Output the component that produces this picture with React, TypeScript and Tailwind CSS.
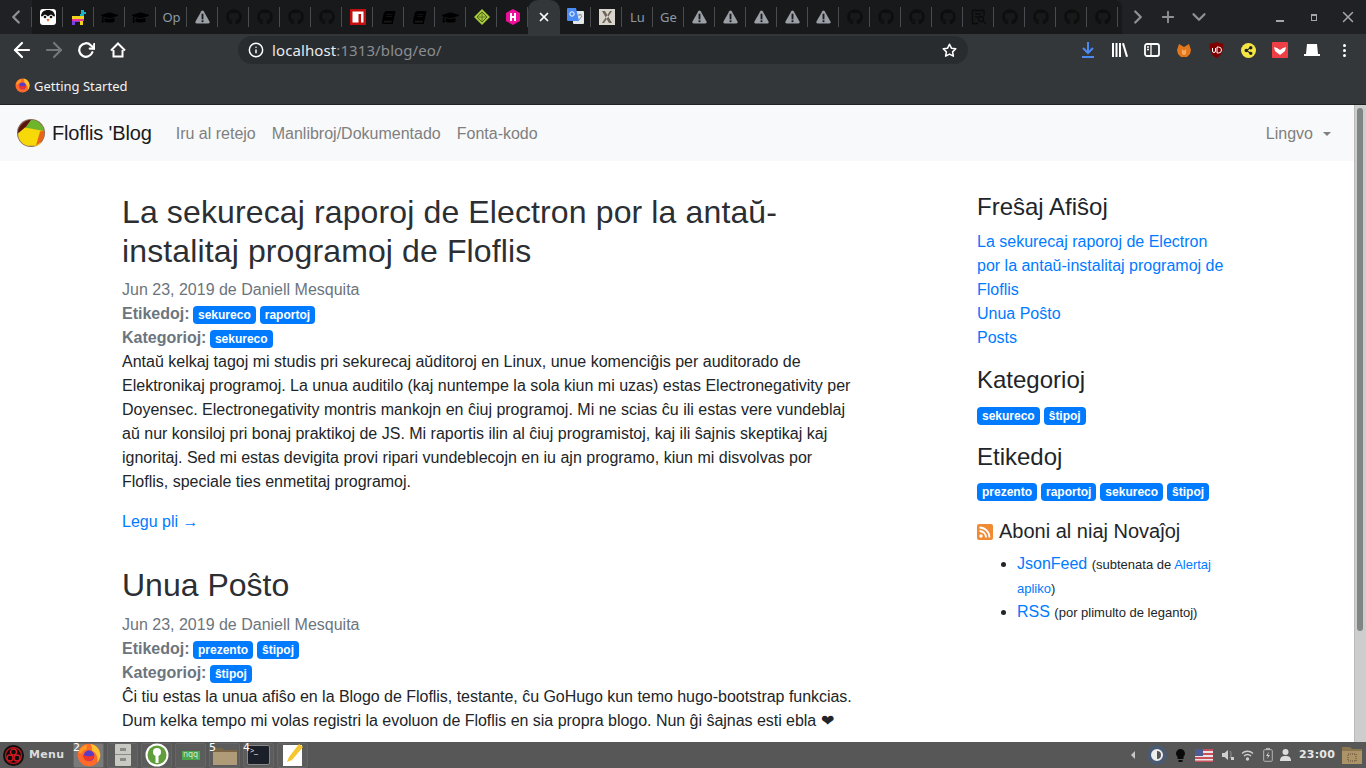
import type { ReactNode } from "react";
import { FaBook, FaGithub, FaGraduationCap, FaShareAlt } from "react-icons/fa";
import {
  FiArrowLeft,
  FiArrowRight,
  FiChevronDown,
  FiChevronLeft,
  FiChevronRight,
  FiPlus,
  FiX,
  FiInfo,
  FiRotateCw,
  FiStar,
} from "react-icons/fi";

const Warn = () => (
  <svg width="15" height="14" viewBox="0 0 16 15">
    <path d="M8 0.5c.6 0 1 .3 1.300.8l6.200 11c.5 1-.1 2.200-1.300 2.200H1.800C.6 14.500 0 13.300 .5 12.300l6.200-11C7 .8 7.400 .5 8 .5z" fill="#9aa0a6" />
    <rect x="7" y="4" width="2" height="6" fill="#1a1b1d" />
    <rect x="7" y="11" width="2" height="2" fill="#1a1b1d" />
  </svg>
);

const Gh = () => <FaGithub size={16} color="#0e0e0f" />;
const Cap = () => <FaGraduationCap size={17} color="#000" />;
const Bk = () => <FaBook size={13} color="#000" className="-skew-x-12" />;

const Penguin = () => (
  <svg width="16" height="16" viewBox="0 0 16 16">
    <rect width="16" height="16" rx="3" fill="#fff" />
    <path d="M8 1C4 1 1.500 3 1 7c1 1 2 0 3-1 1-.5 2.500 0 4 1.500C9.500 6 11 5.500 12 6c1 1 2 2 3 1-.5-4-3-6-7-6z" fill="#111" />
    <circle cx="5" cy="8" r="1.300" fill="#111" />
    <circle cx="11" cy="8" r="1.300" fill="#111" />
    <path d="M6.500 10h3L8 13z" fill="#e8642c" />
  </svg>
);

const Pinata = () => (
  <svg width="16" height="17" viewBox="0 0 16 17">
    <path d="M10 1h3v2h2v2h-2v4H9V5h1z" fill="#17b4c8" />
    <rect x="1" y="7" width="12" height="3" fill="#f2d41f" />
    <rect x="1" y="10" width="12" height="2" fill="#e7359a" />
    <rect x="1" y="12" width="3" height="4" fill="#7b3fe4" />
    <rect x="9" y="12" width="3" height="4" fill="#f2d41f" />
    <rect x="4" y="12" width="5" height="1" fill="#7b3fe4" />
  </svg>
);

const Npm = () => (
  <svg width="16" height="16" viewBox="0 0 16 16">
    <rect width="16" height="16" fill="#c50f0f" />
    <path d="M2.500 2.500h11v11H11V5H8.500v8.500h-6z" fill="#fff" />
  </svg>
);

const Diamond = () => (
  <svg width="16" height="16" viewBox="0 0 16 16">
    <path d="M8 0l8 8-8 8-8-8z" fill="#a5c93c" />
    <path d="M8 3l5 5-5 5-5-5z" fill="none" stroke="#55661c" strokeWidth="1" />
    <path d="M3 8h10M8 3v10" stroke="#55661c" strokeWidth=".8" />
  </svg>
);

const Hexo = () => (
  <svg width="16" height="16" viewBox="0 0 16 16">
    <path d="M8 0l7 4v8l-7 4-7-4V4z" fill="#ef0f9b" />
    <path d="M5 4h2v3h2V4h2v8H9V9H7v3H5z" fill="#fff" />
  </svg>
);

const Translate = () => (
  <svg width="17" height="18" viewBox="0 0 17 18">
    <rect x="6" y="3" width="11" height="13" rx="1" fill="#e4e7ea" />
    <path d="M11 7h4M13 6v1M12 12l3-4" stroke="#7d8a96" strokeWidth="1" />
    <path d="M1 0h8l3 13H1a1 1 0 01-1-1V1a1 1 0 011-1z" fill="#4a8af4" />
    <circle cx="5" cy="6" r="2.200" fill="none" stroke="#fff" strokeWidth="1" />
  </svg>
);

const Xbox = () => (
  <svg width="16" height="16" viewBox="0 0 16 16">
    <rect width="16" height="16" fill="#d9d5cc" />
    <path d="M3 2l3 0 7 12-3 0zM13 2l-2 0-8 12 2 0z" fill="#6b6457" />
  </svg>
);

const SearchDoc = () => (
  <svg width="16" height="16" viewBox="0 0 16 16" fill="none" stroke="#0b0b0c" strokeWidth="1.300">
    <path d="M13 7V1.500H1.500v13H7" />
    <path d="M4 5h6M4 8h3" />
    <circle cx="10" cy="10" r="2.500" />
    <path d="M12 12l3 3" />
  </svg>
);

const Letters = ({ t }: { t: string }) => (
  <span className="text-[13px] text-[#8d99a6] [font-family:'Noto_Sans',sans-serif]">{t}</span>
);

const beforeActive: ReactNode[] = [
  <Penguin />,
  <Pinata />,
  <Cap />,
  <Cap />,
  <Letters t="Op" />,
  <Warn />,
  <Gh />,
  <Gh />,
  <Gh />,
  <Gh />,
  <Npm />,
  <Bk />,
  <Bk />,
  <Cap />,
  <Diamond />,
  <Hexo />,
];

const afterActive: ReactNode[] = [
  <Translate />,
  <Xbox />,
  <Letters t="Lu" />,
  <Letters t="Ge" />,
  <Warn />,
  <Warn />,
  <Warn />,
  <Warn />,
  <Warn />,
  <Gh />,
  <Gh />,
  <Gh />,
  <Gh />,
  <SearchDoc />,
  <Gh />,
  <Gh />,
  <Gh />,
  <Gh />,
];

const TabSlot = ({ children }: { children: ReactNode }) => (
  <div className="flex w-[31px] h-[34px] shrink-0 items-center justify-center relative">
    {children}
    <span className="absolute right-0 top-[7px] h-[20px] w-px bg-[#4a4c4f]" />
  </div>
);

const TabStrip = () => (
  <div className="flex h-[34px] shrink-0 bg-[#202124]">
    <div className="flex bg-[#18191b] w-[1122px] shrink-0 rounded-tr-[8px]">
      <div className="flex w-[32px] h-[34px] items-center justify-center relative bg-[#202124]">
        <FiChevronLeft size={22} color="#8f9194" strokeWidth={2.500} />
        <span className="absolute right-0 top-[7px] h-[20px] w-px bg-[#4a4c4f]" />
      </div>
      {beforeActive.map((icon, i) => (
        <TabSlot key={i}>{icon}</TabSlot>
      ))}
      <div className="relative flex w-[32px] h-[34px] shrink-0 items-center justify-center rounded-t-[10px] bg-[#33373a]">
        <FiX size={14} color="#fff" strokeWidth={3} />
      </div>
      {afterActive.map((icon, i) => (
        <TabSlot key={i}>{icon}</TabSlot>
      ))}
    </div>
    <div className="flex items-center pl-[5px]">
      <FiChevronRight size={22} color="#8f9194" strokeWidth={2.500} />
      <span className="w-[10px]" />
      <FiPlus size={18} color="#8f9194" strokeWidth={2.500} />
      <span className="w-[11px]" />
      <FiChevronDown size={22} color="#8f9194" strokeWidth={2.500} />
    </div>
    <div className="ml-auto flex items-center text-[#a4a6a8]">
      <span className="mt-[7px] block h-[2px] w-[8px] bg-[#a4a6a8] mr-[27px]" />
      <span className="block h-[7px] w-[6px] border border-[#a4a6a8] border-t-2 mr-[22px]" />
      <FiX size={18} className="mr-[9px]" />
    </div>
  </div>
);

const ExtSlot = ({ children }: { children: ReactNode }) => (
  <div className="flex h-[32px] w-[32px] shrink-0 items-center justify-center">{children}</div>
);

const Toolbar = () => (
  <div className="flex h-[32px] shrink-0 items-center bg-[#33373a]">
    <div className="flex w-[238px] items-center pl-[6px]">
      <ExtSlot>
        <FiArrowLeft size={24} color="#fff" strokeWidth={2.200} />
      </ExtSlot>
      <ExtSlot>
        <FiArrowRight size={24} color="#74777a" strokeWidth={2.200} />
      </ExtSlot>
      <ExtSlot>
        <FiRotateCw size={18} color="#fff" strokeWidth={3} />
      </ExtSlot>
      <ExtSlot>
        <svg width="16" height="16" viewBox="0 0 16 16" fill="none" stroke="#fff" strokeWidth="2">
          <path d="M1 8.500L8 1.500l7 7M3.500 8v6.500h9V8" />
        </svg>
      </ExtSlot>
    </div>
    <div className="flex h-[28px] w-[730px] items-center rounded-full bg-[#292c2f] pl-[10px] pr-[11px] text-[15px] tracking-[0.1px] [font-family:'Noto_Sans',sans-serif]">
      <FiInfo size={16} color="#fff" strokeWidth={2.200} />
      <span className="ml-[8px] text-[#e8eaed]">localhost</span>
      <span className="text-[#8b8e91]">:1313/blog/eo/</span>
      <FiStar size={15} color="#fff" strokeWidth={2.500} className="ml-auto" />
    </div>
    <div className="ml-[104px] flex flex-1 items-center">
      <ExtSlot>
        <svg width="14" height="16" viewBox="0 0 14 16" fill="none" stroke="#4c8af0" strokeWidth="2">
          <path d="M7 0v11M2 6l5 5 5-5M1 15h12" />
        </svg>
      </ExtSlot>
      <ExtSlot>
        <svg width="16" height="14" viewBox="0 0 16 14" fill="#fff">
          <rect x="0" width="2" height="14" />
          <rect x="3.500" width="2" height="14" />
          <rect x="7" width="2" height="14" />
          <path d="M10 .5l2-.5 4 13.500-2 .5z" />
        </svg>
      </ExtSlot>
      <ExtSlot>
        <svg width="16" height="14" viewBox="0 0 16 14" fill="none" stroke="#fff" strokeWidth="1.800">
          <rect x="1" y="1" width="14" height="12" rx="2" />
          <path d="M7 1v12M3 4h2M3 6.500h2" strokeWidth="1.300" />
        </svg>
      </ExtSlot>
      <ExtSlot>
        <svg width="16" height="15" viewBox="0 0 16 15">
          <path d="M3 1l5 3 5-3 2 6-1 4-3 3H5L2 11 1 7z" fill="#e2761b" />
          <path d="M6 6l2 2 2-2 0 5-2 1-2-1z" fill="#f6a964" />
        </svg>
      </ExtSlot>
      <ExtSlot>
        <svg width="15" height="16" viewBox="0 0 15 16">
          <path d="M7.500 0c2 1 4 1.500 7 1.500 0 7-2 12-7 14.500C2.500 13.500.5 8.500.5 1.500c3 0 5-.5 7-1.500z" fill="#800000" />
          <path d="M3.500 6v3a1.500 1.500 0 003 0V6M8 5v6h1.500a3 3 0 000-6z" fill="none" stroke="#fff" strokeWidth="1" />
        </svg>
      </ExtSlot>
      <ExtSlot>
        <span className="flex h-[15px] w-[15px] items-center justify-center rounded-full bg-[#f6e643]">
          <FaShareAlt size={9} color="#222" />
        </span>
      </ExtSlot>
      <ExtSlot>
        <svg width="16" height="16" viewBox="0 0 16 16">
          <rect width="16" height="16" rx="1" fill="#ef3f46" />
          <path d="M2 5l3 1 3 2 3-2 3-1-1 4-5 4-5-4z" fill="#fff" />
        </svg>
      </ExtSlot>
      <ExtSlot>
        <svg width="16" height="12" viewBox="0 0 16 12" fill="#fff">
          <path d="M3 0h10l1 10h2v2H0v-2h2z" />
        </svg>
      </ExtSlot>
      <ExtSlot>
        <span className="flex h-[13px] flex-col justify-between">
          <span className="block h-[3px] w-[3px] rounded-full bg-white" />
          <span className="block h-[3px] w-[3px] rounded-full bg-white" />
          <span className="block h-[3px] w-[3px] rounded-full bg-white" />
        </span>
      </ExtSlot>
    </div>
  </div>
);

const FirefoxMark = ({ size }: { size: number }) => (
  <svg width={size} height={size} viewBox="0 0 16 16">
    <circle cx="8" cy="8" r="7.500" fill="#ff6a2b" />
    <path d="M9 .6c3.500.4 6.400 3.400 6.500 7.400 0 2-.8 3.800-2 5.200.8-3.400-.4-6.600-3.500-8.200C10 3.500 9.800 2 9 .6z" fill="#ffc22e" />
    <path d="M1 6.500C2 3.500 4.500 1.500 7 1c-.6 1-.8 2-.4 3.200C4.500 4.500 3.500 5.500 3 7z" fill="#ff9a1f" />
    <circle cx="8" cy="8.500" r="3.600" fill="#5a3bc4" />
    <path d="M4 7.500c1.500 1.500 5 2 7.500.5-.3 2.500-2 4-4 4s-3.500-1.500-3.500-4.500z" fill="#f0362c" />
  </svg>
);

const BookmarkBar = () => (
  <div className="flex h-[39px] shrink-0 items-start border-b border-[#202225] bg-[#33373a] pl-[15px] pt-[12px]">
    <FirefoxMark size={15} />
    <span className="ml-[4px] text-[13px] leading-[17px] text-[#f1f3f4] [font-family:'Noto_Sans',sans-serif]">
      Getting Started
    </span>
  </div>
);

const NavBar = () => (
  <nav className="flex h-[56px] shrink-0 items-center bg-[#f8f9fa] pl-[17px] pr-[23px]">
    <svg width="28" height="28" viewBox="0 0 28 28">
      <circle cx="14" cy="14" r="14" fill="#8a6a5c" />
      <path d="M14 .8A13.200 13.200 0 0127 12l-19-3z" fill="#6fb52c" />
      <path d="M8 9L.8 14A13.200 13.200 0 015 5c2-2 5-4 9-4.200z" fill="#5c140c" />
      <path d="M8 8.500l19 3.500-4 13-3 1.800H10a13 13 0 01-9-12z" fill="#f7d908" />
      <path d="M27 11.500a13.200 13.200 0 01-8 15l4-14z" fill="#e8651a" />
    </svg>
    <span className="ml-[7px] text-[20px] tracking-[-0.15px] text-[#1a1a1a]">Floflis 'Blog</span>
    <a className="ml-[24px] pt-[1px] text-[#7f7f7f]">Iru al retejo</a>
    <a className="ml-[16px] pt-[1px] text-[#7f7f7f]">Manlibroj/Dokumentado</a>
    <a className="ml-[16px] pt-[1px] text-[#7f7f7f]">Fonta-kodo</a>
    <a className="ml-auto flex items-center pt-[1px] text-[#7f7f7f]">
      Lingvo
      <span className="ml-[10px] h-0 w-0 border-x-[4px] border-t-[4px] border-x-transparent border-t-[#7f7f7f]" />
    </a>
  </nav>
);

const Badge = ({ children }: { children: ReactNode }) => (
  <span className="mr-[4px] inline-block rounded-[4px] bg-[#007bff] px-[5px] py-[3px] align-baseline text-[12px] leading-[12px] font-bold text-white">
    {children}
  </span>
);

const Post = ({
  title,
  titleClass,
  tags,
  cats,
  children,
}: {
  title: ReactNode;
  titleClass: string;
  tags: string[];
  cats: string[];
  children: ReactNode;
}) => (
  <article className="mb-[32px]">
    <h2 className={`text-[32px] leading-[39px] text-[#2b2f33] ${titleClass}`}>{title}</h2>
    <p className="text-[#6c757d]">Jun 23, 2019 de Daniell Mesquita</p>
    <p className="text-[#6c757d]">
      <b className="mr-[-1px]">Etikedoj:</b>{" "}
      {tags.map((t) => (
        <Badge key={t}>{t}</Badge>
      ))}
    </p>
    <p className="text-[#6c757d]">
      <b className="mr-[-1px]">Kategorioj:</b>{" "}
      {cats.map((t) => (
        <Badge key={t}>{t}</Badge>
      ))}
    </p>
    {children}
  </article>
);

const Content = () => (
  <div className="w-[735px] shrink-0">
    <Post
      title="La sekurecaj raporoj de Electron por la antaŭ-instalitaj programoj de Floflis"
      titleClass="mb-[6.8px] tracking-[0.125px]"
      tags={["sekureco", "raportoj"]}
      cats={["sekureco"]}
    >
      <p className="mb-4 text-[#212529]">
        Antaŭ kelkaj tagoj mi studis pri sekurecaj aŭditoroj en Linux, unue komenciĝis per auditorado de Elektronikaj
        programoj. La unua auditilo (kaj nuntempe la sola kiun mi uzas) estas Electronegativity per Doyensec.
        Electronegativity montris mankojn en ĉiuj programoj. Mi ne scias ĉu ili estas vere vundeblaj aŭ nur konsiloj pri
        bonaj praktikoj de JS. Mi raportis ilin al ĉiuj programistoj, kaj ili ŝajnis skeptikaj kaj ignoritaj. Sed mi
        estas devigita provi ripari vundeblecojn en iu ajn programo, kiun mi disvolvas por Floflis, speciale ties
        enmetitaj programoj.
      </p>
      <a className="text-[#007bff]">Legu pli →</a>
    </Post>
    <Post title="Unua Poŝto" titleClass="mb-[8.4px]" tags={["prezento", "ŝtipoj"]} cats={["ŝtipoj"]}>
      <p className="tracking-[-0.03px] text-[#212529]">
        Ĉi tiu estas la unua afiŝo en la Blogo de Floflis, testante, ĉu GoHugo kun temo hugo-bootstrap funkcias. Dum
        kelka tempo mi volas registri la evoluon de Floflis en sia propra blogo. Nun ĝi ŝajnas esti ebla ❤
      </p>
    </Post>
  </div>
);

const Sidebar = () => (
  <aside className="ml-[120px] w-[250px] shrink-0 text-[#212529]">
    <h4 className="mb-2 text-[24px] leading-[28.8px]">Freŝaj Afiŝoj</h4>
    <ul className="mb-4 text-[#007bff]">
      <li>La sekurecaj raporoj de Electron por la antaŭ-instalitaj programoj de Floflis</li>
      <li>Unua Poŝto</li>
      <li>Posts</li>
    </ul>
    <h4 className="mb-2 text-[24px] leading-[28.8px]">Kategorioj</h4>
    <p className="mb-4">
      <Badge>sekureco</Badge>
      <Badge>ŝtipoj</Badge>
    </p>
    <h4 className="mb-2 text-[24px] leading-[28.8px]">Etikedoj</h4>
    <p className="mb-4">
      <Badge>prezento</Badge>
      <Badge>raportoj</Badge>
      <Badge>sekureco</Badge>
      <Badge>ŝtipoj</Badge>
    </p>
    <h5 className="mb-2 flex items-center text-[20px] leading-[24px]">
      <svg width="16" height="16" viewBox="0 0 16 16" className="mr-[6px] mt-[2px]">
        <rect width="16" height="16" rx="2" fill="#f08a33" />
        <circle cx="4" cy="12" r="1.700" fill="#fff" />
        <path d="M2.500 7a6.500 6.500 0 016.500 6.500M2.500 3.500a10 10 0 0110 10" fill="none" stroke="#fff" strokeWidth="1.800" />
      </svg>
      Aboni al niaj Novaĵoj
    </h5>
    <ul className="list-disc pl-[40px] pt-[1px]">
      <li>
        <a className="text-[#007bff]">JsonFeed</a>{" "}
        <small className="text-[13px] leading-none">
          (subtenata de <a className="text-[#007bff]">Alertaj apliko</a>)
        </small>
      </li>
      <li>
        <a className="text-[#007bff]">RSS</a>{" "}
        <small className="text-[13px] leading-none">(por plimulto de legantoj)</small>
      </li>
    </ul>
  </aside>
);

const DockSlot = ({ active, num, children }: { active?: boolean; num?: string; children: ReactNode }) => (
  <div
    className={`relative flex h-[25px] w-[31px] shrink-0 items-center justify-center rounded-[2px] border border-[#666] ${
      active ? "bg-[#7a7a7a]" : "bg-[#5c5c5c]"
    }`}
  >
    {children}
    {num && (
      <span className="absolute -left-[1px] -top-[2px] text-[11px] leading-[12px] text-white [font-family:'DejaVu_Sans',sans-serif]">
        {num}
      </span>
    )}
  </div>
);

const TaskBar = () => (
  <div className="flex h-[26px] shrink-0 items-center bg-[#575757] pl-[3px]">
    <svg width="21" height="21" viewBox="0 0 21 21">
      <circle cx="10.500" cy="10.500" r="10.500" fill="#0d0d0d" />
      <circle cx="10.500" cy="10.500" r="8" fill="none" stroke="#b3141c" strokeWidth="1.500" />
      <circle cx="10.500" cy="7" r="3" fill="none" stroke="#d11a22" strokeWidth="1.300" />
      <circle cx="7" cy="13" r="3" fill="none" stroke="#d11a22" strokeWidth="1.300" />
      <circle cx="14" cy="13" r="3" fill="none" stroke="#d11a22" strokeWidth="1.300" />
    </svg>
    <span className="ml-[5px] w-[44px] text-[11px] font-bold tracking-[0.3px] text-[#dcdcdc] [font-family:'DejaVu_Sans',sans-serif]">
      Menu
    </span>
    <div className="flex gap-[3px]">
      <DockSlot active num="2">
        <FirefoxMark size={24} />
      </DockSlot>
      <DockSlot>
        <svg width="18" height="24" viewBox="0 0 18 24">
          <rect x="1" y="1" width="16" height="22" rx="1" fill="#c9c9c4" />
          <rect x="1" y="11" width="16" height="1" fill="#8a8a86" />
          <rect x="6" y="5" width="6" height="3" fill="#8a8a86" />
          <rect x="6" y="15" width="6" height="3" fill="#8a8a86" />
        </svg>
      </DockSlot>
      <DockSlot>
        <svg width="24" height="24" viewBox="0 0 24 24">
          <circle cx="12" cy="12" r="11.500" fill="#fff" />
          <circle cx="12" cy="12" r="9.500" fill="#5f9e3a" />
          <circle cx="12" cy="9" r="4" fill="#fff" />
          <rect x="10.500" y="11" width="3" height="9" fill="#fff" />
        </svg>
      </DockSlot>
      <DockSlot>
        <div className="flex h-[9px] w-[18px] items-center justify-center bg-[#4aa54d] text-[8px] leading-[8px] text-[#cfe8d0] [font-family:'DejaVu_Sans',sans-serif]">
          nqq
        </div>
      </DockSlot>
      <DockSlot num="5">
        <svg width="26" height="21" viewBox="0 0 26 21">
          <path d="M1 3h9l2 2h13v15H1z" fill="#7a6547" />
          <rect x="1" y="7" width="24" height="13" fill="#b09b78" />
        </svg>
      </DockSlot>
      <DockSlot num="4">
        <div className="h-[20px] w-[23px] rounded-[2px] border border-[#888] bg-[#1b1f2a] pl-[2px] text-[7px] leading-[9px] text-white">
          &gt;_
        </div>
      </DockSlot>
      <DockSlot>
        <svg width="22" height="24" viewBox="0 0 22 24">
          <rect x="1" y="2" width="19" height="21" fill="#fff" />
          <path d="M17 1l4 3-11 13-5 2 2-5z" fill="#f5c62e" />
        </svg>
      </DockSlot>
    </div>
    <div className="ml-auto flex items-center pr-[4px]">
      <span className="h-0 w-0 border-y-[4px] border-r-[4px] border-y-transparent border-r-[#c8c8c8]" />
      <span className="ml-[12px] flex h-[20px] w-[20px] items-center justify-center rounded-full bg-[#4a5a72]">
        <span className="block h-[12px] w-[12px] rounded-full border-2 border-[#eee] bg-[linear-gradient(90deg,#eee_50%,#555_50%)]" />
      </span>
      <svg className="ml-[9px]" width="9" height="13" viewBox="0 0 9 13">
        <path d="M4.500 0a4.500 4.500 0 013 7.800V10h-6V7.800A4.500 4.500 0 014.500 0z" fill="#0a0a0a" />
        <rect x="2.500" y="11" width="4" height="2" fill="#0a0a0a" />
      </svg>
      <svg className="ml-[10px]" width="18" height="13" viewBox="0 0 18 13">
        <rect width="18" height="13" fill="#e9e4e6" />
        <path d="M0 0h18v2H0zM0 4h18v2H0zM0 8h18v2H0zM0 11.500h18V13H0z" fill="#c9505a" />
        <rect width="8" height="7" fill="#4d5d91" />
      </svg>
      <svg className="ml-[9px]" width="13" height="12" viewBox="0 0 13 12" fill="#cfcfcf">
        <path d="M0 4h2.500L6 1v10L2.500 8H0z" />
        <path d="M8 2c1.500 2 1.500 5 0 7" fill="none" stroke="#9a9a9a" />
        <rect x="9" y="8" width="3" height="3" />
      </svg>
      <svg className="ml-[6px]" width="13" height="11" viewBox="0 0 13 11" fill="none" stroke="#cfcfcf" strokeWidth="1.300">
        <path d="M1 3.500c3-3 8-3 11 0M3 6c2-2 5-2 7 0" />
        <circle cx="6.500" cy="9" r="1" fill="#cfcfcf" />
      </svg>
      <svg className="ml-[9px]" width="10" height="14" viewBox="0 0 10 14">
        <rect x="3" y="0" width="4" height="2" fill="#b5b5b5" />
        <rect x=".7" y="1.700" width="8.600" height="11.600" rx="1" fill="none" stroke="#b5b5b5" />
        <path d="M6 3.500L3 8h2L4 11l3-4H5z" fill="#cfcfcf" />
      </svg>
      <svg className="ml-[7px]" width="11" height="12" viewBox="0 0 11 12" fill="#dcdcdc">
        <circle cx="5.500" cy="3" r="3" />
        <path d="M0 12c0-4 2-5 5.500-5S11 8 11 12z" />
      </svg>
      <span className="ml-[8px] text-[11px] font-bold tracking-[0.2px] text-[#e8e8e8] [font-family:'DejaVu_Sans',sans-serif]">
        23:00
      </span>
      <svg className="ml-[7px]" width="20" height="18" viewBox="0 0 20 18">
        <path d="M0 1h8l2 2h10v15H0z" fill="#8b7650" />
        <rect x="0" y="5" width="20" height="13" fill="#ad9468" />
        <rect x="6" y="8" width="8" height="7" fill="none" stroke="#5b4a30" strokeDasharray="1 1" />
      </svg>
    </div>
  </div>
);

export default function App() {
  return (
    <div className="flex h-screen flex-col overflow-hidden bg-white text-[16px] leading-[24px] [font-family:'Liberation_Sans',Arial,sans-serif]">
      <TabStrip />
      <Toolbar />
      <BookmarkBar />
      <div className="flex min-h-0 flex-1">
        <div className="min-w-0 flex-1 overflow-hidden">
          <NavBar />
          <main className="flex pl-[122px] pt-[32px]">
            <Content />
            <Sidebar />
          </main>
        </div>
        <div className="w-[12px] shrink-0 border-l border-[#bdb9b6] bg-[#cdcdcd] pl-[2px] pt-[3px]">
          <div className="h-[523px] w-[6px] rounded-full bg-[#7f8585]" />
        </div>
      </div>
      <TaskBar />
    </div>
  );
}
